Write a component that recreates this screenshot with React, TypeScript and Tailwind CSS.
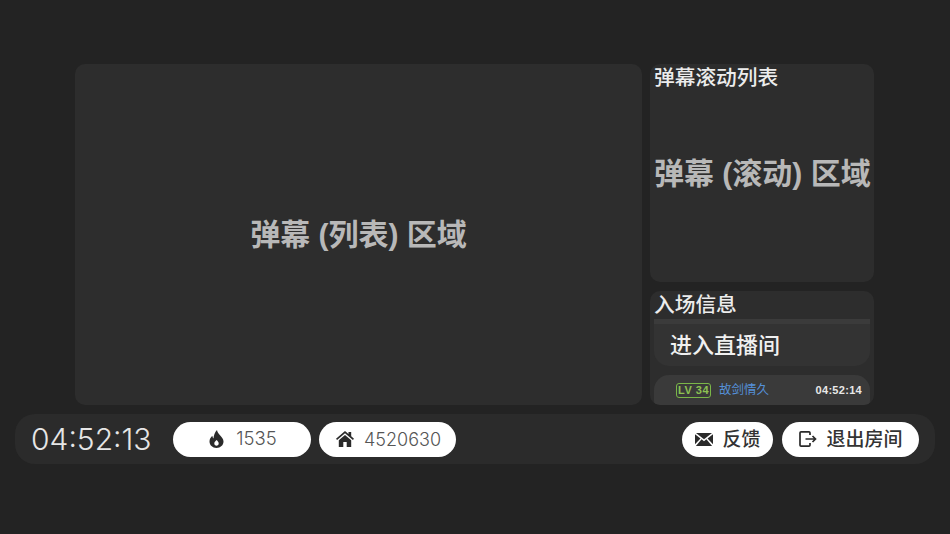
import React from "react";

export default function App() {
  return (
    <div className="w-[950px] h-[534px] bg-[#232323] flex flex-col overflow-hidden font-['Liberation_Sans','Noto_Sans_CJK_SC',sans-serif]">
      <div className="mt-[64px] ml-[75px] flex gap-[8px] h-[341px]">
        <div className="w-[567px] bg-[#2d2d2d] rounded-[10px] flex items-center justify-center text-[30px] font-bold leading-none text-[#b8b8b8] pt-[1px]">
          弹幕 (列表) 区域
        </div>
        <div className="w-[224px] flex flex-col gap-[9px]">
          <div className="h-[218px] shrink-0 bg-[#2d2d2d] rounded-[10px] px-[4px] flex flex-col">
            <div className="text-[20.700px] leading-[28px] font-medium text-[#ececec]">弹幕滚动列表</div>
            <div className="text-[30px] leading-[40px] mt-[62px] font-bold text-[#b8b8b8] whitespace-nowrap">弹幕 (滚动) 区域</div>
          </div>
          <div className="h-[114px] shrink-0 bg-[#2d2d2d] rounded-[10px] px-[4px] overflow-hidden flex flex-col">
            <div className="text-[20.700px] leading-[28px] font-medium text-[#ececec] shrink-0">入场信息</div>
            <div className="h-[47px] shrink-0 bg-[#333333] rounded-b-[15px] border-t-[5px] border-[#3b3b3b] px-[16px] pt-[1px] flex items-center text-[22px] font-medium text-[#f0f0f0]">
              进入直播间
            </div>
            <div className="h-[40px] mt-[9px] shrink-0 bg-[#3a3a3a] rounded-[15px] flex pl-[22px] pr-[8px] pt-[8px] items-start">
              <span className="border-[1.500px] border-[#7ab648] rounded-[3px] text-[#8cc152] text-[11px] leading-[12px] font-bold h-[15px] w-[35px] text-center tracking-[0.500px] whitespace-nowrap">LV 34</span>
              <span className="ml-[8px] text-[12.500px] leading-[15px] text-[#5590d8]">故剑情久</span>
              <span className="ml-auto text-[11px] leading-[15px] font-bold text-[#e8e8e8] tracking-[0.300px]">04:52:14</span>
            </div>
          </div>
        </div>
      </div>
      <div className="mt-[9px] mx-[15px] h-[50px] rounded-[20px] bg-[#2b2b2b] flex items-center pl-[16px] pr-[16px] font-['Inter','Noto_Sans_CJK_SC',sans-serif]">
        <span className="w-[142px] text-[30px] font-light text-[#e6e6e6] leading-none whitespace-nowrap">04:52:13</span>
        <div className="w-[138px] h-[35px] bg-white rounded-full flex items-center justify-center gap-[12px] text-[#555555] text-[18.500px] font-light pl-[2px]">
          <svg viewBox="0 0 14 18" className="w-[15px] h-[18px]" fill="#2a2a2a"><path fillRule="evenodd" d="M7.500 0c.3 2.200 1.500 3.600 3 5.200C12.300 7 14 9 14 11.600 14 15.300 11 18 7 18s-7-2.700-7-6.400c0-2.500 1.300-4.400 2.800-5.800.1 1.100.5 2 1.200 2.700C4.200 5.500 5.300 2 7.500 0zM7 10c-1.300 1.200-2.200 2.300-2.200 3.500 0 1.300 1 2.200 2.200 2.200s2.200-.9 2.200-2.200c0-1.300-.9-2.300-2.200-3.500z"/></svg>
          <span>1535</span>
        </div>
        <div className="ml-[8px] w-[137px] h-[35px] bg-white rounded-full flex items-center justify-center gap-[10px] text-[#555555] text-[18px] font-light pl-[2px]">
          <svg viewBox="0 0 18 16" className="w-[18px] h-[16px]" fill="#2a2a2a"><path fillRule="evenodd" d="M9 0l3.500 3V1h2.700v4.300L18 7.700l-1.100 1.300L9 2.300 1.100 9 0 7.700 9 0zM2.800 9.300 9 4l6.200 5.300V16H2.800V9.300zM7.300 11v5h3.400v-5H7.300z"/></svg>
          <span>4520630</span>
        </div>
        <div className="ml-auto w-[91px] h-[35px] bg-white rounded-full flex items-center justify-center gap-[9px] text-[#333333] text-[19px] font-medium pt-[2px] pl-[1px]">
          <svg viewBox="0 0 18 13" className="w-[18px] h-[13px] -mt-[2px]" fill="#2a2a2a"><path d="M1 0h16L9 6.200z"/><path d="M0 1.200v10l5.500-5.800zM18 1.200v10l-5.500-5.800zM6.600 6.300 .9 13h16.200l-5.700-6.700L9 8.200z"/></svg>
          <span>反馈</span>
        </div>
        <div className="ml-[9px] w-[137px] h-[35px] bg-white rounded-full flex items-center justify-center gap-[9px] text-[#333333] text-[19px] font-medium pt-[2px] pl-[1px]">
          <svg viewBox="0 0 18 16" className="w-[18px] h-[16px] -mt-[2px]" fill="none" stroke="#2a2a2a" strokeWidth="1.700"><path d="M11 4V1.800A1 1 0 0 0 10 .9H2a1 1 0 0 0-1 .9v12.400a1 1 0 0 0 1 .9h8a1 1 0 0 0 1-.9V12"/><path d="M6.500 8H16.500M13.500 5l3 3-3 3"/></svg>
          <span>退出房间</span>
        </div>
      </div>
    </div>
  );
}
